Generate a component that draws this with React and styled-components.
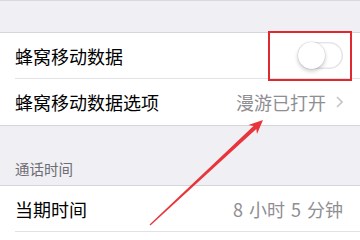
import React from "react";
import styled, { createGlobalStyle } from "styled-components";

const Global = createGlobalStyle`
  html, body { margin: 0; padding: 0; background: #efeff4; }
  body { font-family: "Noto Sans CJK SC", "Noto Sans", sans-serif; -webkit-font-smoothing: antialiased; }
`;

const Page = styled.div`
  position: relative;
  width: 360px;
  height: 240px;
  overflow: hidden;
  background: #efeff4;
  border-top: 1px solid #d9d9de;
  box-sizing: border-box;
`;

const Spacer = styled.div`
  height: ${(p) => p.h}px;
  display: flex;
  align-items: flex-end;
  padding: 0 15px ${(p) => p.pb || 0}px;
  box-sizing: border-box;
`;

const SectionLabel = styled.div`
  font-size: 14.5px;
  color: #6d6d72;
  line-height: 1;
`;

const Group = styled.div`
  background: #fff;
  border-top: 1px solid #d6d6da;
  border-bottom: 1px solid #d6d6da;
`;

const Row = styled.div`
  height: 46px;
  display: flex;
  align-items: center;
  margin-left: 15px;
  padding-right: 17px;
  border-bottom: ${(p) => (p.last ? "none" : "1px solid #e2e2e6")};
  box-sizing: border-box;
`;

const Label = styled.div`
  flex: 1;
  font-size: 18px;
  color: #000;
  line-height: 1;
`;

const Detail = styled.div`
  font-size: 18px;
  color: #8e8e93;
  line-height: 1;
  display: flex;
  align-items: center;
  gap: 10px;
  word-spacing: 2px;
`;

const Switch = styled.div`
  position: relative;
  width: 45px;
  height: 27px;
  border-radius: 14px;
  background: #fff;
  box-shadow: inset 0 0 0 1.5px #e5e5ea;
`;

const Knob = styled.div`
  position: absolute;
  left: 0;
  top: 0;
  width: 27px;
  height: 27px;
  border-radius: 50%;
  background: #fff;
  box-shadow: 0 2px 4px rgba(0, 0, 0, 0.22), 0 0 0 0.5px rgba(0, 0, 0, 0.1);
`;

const Highlight = styled.div`
  position: absolute;
  left: 268px;
  top: 30px;
  width: 84px;
  height: 50px;
  border: 2px solid #e0282e;
  box-sizing: border-box;
`;

const Overlay = styled.svg`
  position: absolute;
  left: 0;
  top: 0;
  pointer-events: none;
`;

const Chevron = () => (
  <svg width="7" height="12" viewBox="0 0 7 12">
    <path d="M1 1 L6 6 L1 11" fill="none" stroke="#c4c4c9" strokeWidth="1.6" />
  </svg>
);

export default function App() {
  return (
    <Page>
      <Global />
      <Spacer h={31} />
      <Group>
        <Row>
          <Label>蜂窝移动数据</Label>
          <Switch>
            <Knob />
          </Switch>
        </Row>
        <Row last>
          <Label>蜂窝移动数据选项</Label>
          <Detail>
            漫游已打开
            <Chevron />
          </Detail>
        </Row>
      </Group>
      <Spacer h={59} pb={9}>
        <SectionLabel>通话时间</SectionLabel>
      </Spacer>
      <Group>
        <Row>
          <Label>当期时间</Label>
          <Detail>8 小时 5 分钟</Detail>
        </Row>
        <Row last />
      </Group>
      <Highlight />
      <Overlay width="360" height="240" viewBox="0 0 360 240">
        <polygon
          points="149.6,223.5 253.5,125 248.4,123.9 263,119 257,133.1 256.3,128 150.4,224.5"
          fill="#e8353b"
        />
      </Overlay>
    </Page>
  );
}
